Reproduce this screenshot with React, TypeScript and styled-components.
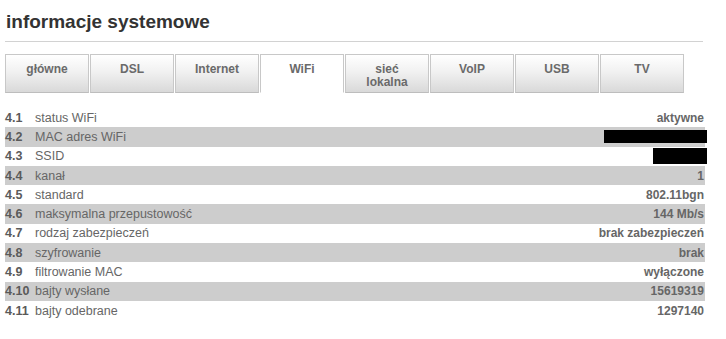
import React from "react";
import styled, { createGlobalStyle } from "styled-components";

const GlobalStyle = createGlobalStyle`
  body {
    margin: 0;
    background: #fff;
    font-family: "Liberation Sans", Arial, sans-serif;
  }
`;

type Row = { no: string; label: string; value?: string; hidden?: number; hiddenH?: number };

const tabs = ["główne", "DSL", "Internet", "WiFi", "sieć\nlokalna", "VoIP", "USB", "TV"];

const rows: Row[] = [
  { no: "4.1", label: "status WiFi", value: "aktywne" },
  { no: "4.2", label: "MAC adres WiFi", hidden: 103, hiddenH: 13 },
  { no: "4.3", label: "SSID", hidden: 54, hiddenH: 16 },
  { no: "4.4", label: "kanał", value: "1" },
  { no: "4.5", label: "standard", value: "802.11bgn" },
  { no: "4.6", label: "maksymalna przepustowość", value: "144 Mb/s" },
  { no: "4.7", label: "rodzaj zabezpieczeń", value: "brak zabezpieczeń" },
  { no: "4.8", label: "szyfrowanie", value: "brak" },
  { no: "4.9", label: "filtrowanie MAC", value: "wyłączone" },
  { no: "4.10", label: "bajty wysłane", value: "15619319" },
  { no: "4.11", label: "bajty odebrane", value: "1297140" },
];

const Page = styled.div`
  padding: 0 0 0 5px;
  width: 698px;
`;

const Header = styled.div`
  padding: 10px 0 7px 1px;
  border-bottom: 1px solid #d2d2d2;
`;

const Title = styled.h1`
  margin: 0;
  font-size: 19px;
  line-height: 24px;
  font-weight: bold;
  color: #333;
`;

const TabBar = styled.div`
  display: flex;
  margin-top: 12px;
`;

const Tab = styled.div<{ $active?: boolean }>`
  box-sizing: border-box;
  flex: none;
  width: 84px;
  height: 39px;
  margin-right: 1px;
  padding-top: 8px;
  border: 1px solid #c8c8c8;
  border-bottom-color: ${(p) => (p.$active ? "transparent" : "#bdbdbd")};
  background: ${(p) =>
    p.$active ? "#fff" : "linear-gradient(to bottom, #ffffff 0%, #f1f1f1 45%, #d9d9d9 100%)"};
  color: #6a6a6a;
  font-size: 12px;
  font-weight: bold;
  line-height: 13px;
  text-align: center;
  white-space: pre-line;
`;

const Table = styled.div`
  margin-top: 15px;
  width: 700px;
`;

const InfoRow = styled.div<{ $shaded: boolean }>`
  display: flex;
  align-items: center;
  height: 19.3px;
  background: ${(p) => (p.$shaded ? "#cdcdcd" : "transparent")};
  color: #666;
`;

const No = styled.span`
  width: 30px;
  font-size: 12.5px;
  font-weight: bold;
  color: #5a5a5a;
`;

const Label = styled.span`
  flex: 1;
  font-size: 12.5px;
  color: #666;
`;

const Value = styled.span`
  font-size: 12px;
  font-weight: bold;
  color: #666;
  padding-right: 1px;
`;

const Redacted = styled.span<{ $w: number; $h: number }>`
  display: block;
  width: ${(p) => p.$w}px;
  height: ${(p) => p.$h}px;
  background: #000;
  margin-right: -2px;
`;

export default function App() {
  return (
    <Page>
      <GlobalStyle />
      <Header>
        <Title>informacje systemowe</Title>
      </Header>
      <TabBar>
        {tabs.map((t) => (
          <Tab key={t} $active={t === "WiFi"}>
            {t}
          </Tab>
        ))}
      </TabBar>
      <Table>
        {rows.map((r, i) => (
          <InfoRow key={r.no} $shaded={i % 2 === 1}>
            <No>{r.no}</No>
            <Label>{r.label}</Label>
            {r.hidden ? (
              <Redacted $w={r.hidden} $h={r.hiddenH ?? 14} />
            ) : (
              <Value>{r.value}</Value>
            )}
          </InfoRow>
        ))}
      </Table>
    </Page>
  );
}
